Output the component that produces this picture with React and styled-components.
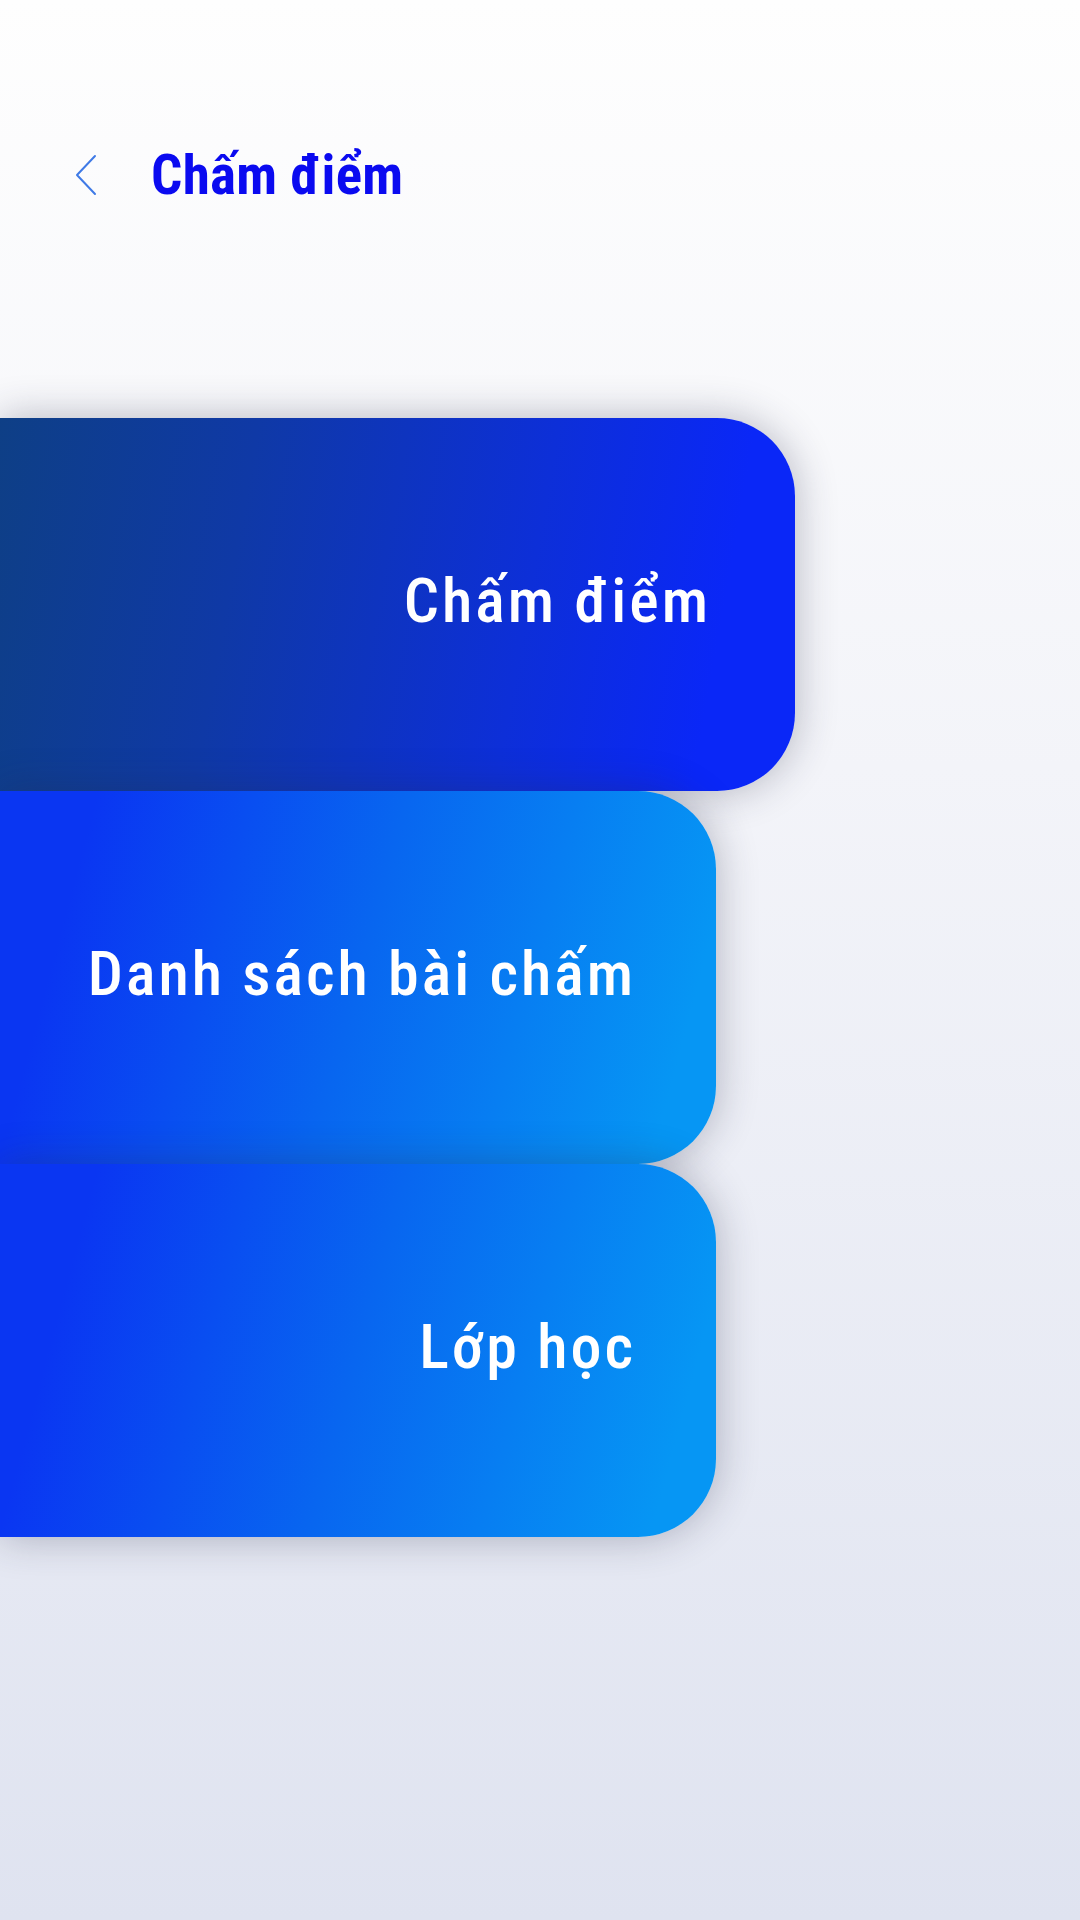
import styled, { createGlobalStyle } from 'styled-components';

const GlobalStyle = createGlobalStyle`
  html, body {
    margin: 0;
    padding: 0;
  }
  body {
    width: 1080px;
    min-height: 1920px;
    background: linear-gradient(180deg, #fefefe 0%, #f3f4f9 40%, #dfe3f0 100%);
    font-family: "Roboto Condensed", Roboto, "Liberation Sans", sans-serif;
    overflow: hidden;
  }
`;

const Screen = styled.div`
  width: 1080px;
  height: 1920px;
  display: flex;
  flex-direction: column;
`;

const Header = styled.header`
  display: flex;
  align-items: center;
  height: 90px;
  margin-top: 130px;
  padding-left: 74px;
`;

const BackButton = styled.button`
  display: flex;
  align-items: center;
  justify-content: center;
  width: 24px;
  height: 44px;
  padding: 0;
  border: none;
  background: none;
  cursor: pointer;
  margin-right: 53px;
`;

const Title = styled.h1`
  margin: 0;
  font-size: 55px;
  font-weight: 700;
  color: #0a0af0;
  font-stretch: condensed;
  letter-spacing: 0.3px;
`;

const Menu = styled.nav`
  display: flex;
  flex-direction: column;
  margin-top: 198px;
`;

const Card = styled.button`
  position: relative;
  display: flex;
  align-items: center;
  justify-content: flex-end;
  width: ${p => p.$width}px;
  height: 373px;
  padding: 0 ${p => p.$pad}px 8px 0;
  border: none;
  border-radius: 0 78px 78px 0;
  background: ${p => p.$bg};
  box-shadow: 0 0 42px rgba(40, 45, 70, 0.32);
  color: #ffffff;
  font-family: inherit;
  font-size: 62px;
  font-weight: 500;
  font-stretch: condensed;
  letter-spacing: 3px;
  cursor: pointer;
  text-align: right;
`;

const darkGrad = 'linear-gradient(100deg, #0e3f86 0%, #0f39a6 30%, #0d2fd8 65%, #0a27f7 88%)';
const lightGrad = 'linear-gradient(105deg, #0a36f2 12%, #0866f0 50%, #0696f4 92%)';

const items = [
  { label: 'Chấm điểm', width: 795, pad: 84, bg: darkGrad },
  { label: 'Danh sách bài chấm', width: 716, pad: 80, bg: lightGrad },
  { label: 'Lớp học', width: 716, pad: 80, bg: lightGrad },
];

function ChevronLeft() {
  return (
    <svg width="22" height="42" viewBox="0 0 22 42" fill="none">
      <path d="M20 2 L2 21 L20 40" stroke="#3f7ae6" strokeWidth="2" strokeLinecap="round" strokeLinejoin="round" />
    </svg>
  );
}

export default function App() {
  return (
    <>
      <GlobalStyle />
      <Screen>
        <Header>
          <BackButton aria-label="Quay lại">
            <ChevronLeft />
          </BackButton>
          <Title>Chấm điểm</Title>
        </Header>
        <Menu>
          {items.map(item => (
            <Card key={item.label} $width={item.width} $pad={item.pad} $bg={item.bg}>
              {item.label}
            </Card>
          ))}
        </Menu>
      </Screen>
    </>
  );
}
